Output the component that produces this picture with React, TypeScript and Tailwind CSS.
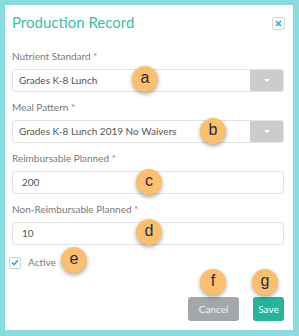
import React from "react";

const font = { fontFamily: "Lato, 'Open Sans', sans-serif" };

function Badge({ letter, x, y }: { letter: string; x: number; y: number }) {
  return (
    <div
      className="absolute w-[26px] h-[26px] rounded-full bg-[#fbbf6e] flex items-center justify-center text-[16px] leading-none text-[#1f2a4d] shadow-[0_2px_4px_rgba(0,0,0,0.35)]"
      style={{ left: x - 13, top: y - 13, fontFamily: "'Liberation Sans', Arial, sans-serif" }}
    >
      <span className="-mt-[2px]">{letter}</span>
    </div>
  );
}

function Label({ text }: { text: string }) {
  return (
    <div className="h-[14px] leading-[14px] text-[10px] text-[#7a7a7a] mb-[6px]">
      {text} <span className="text-[#e05a5a]">*</span>
    </div>
  );
}

function Select({ value }: { value: string }) {
  return (
    <div className="h-[23px] flex border border-[#e3e3e3] rounded-[3px] overflow-hidden">
      <div className="flex-1 pl-[6px] flex items-center text-[10px] text-[#555]">{value}</div>
      <div className="w-[33px] bg-[#cccccc] flex items-center justify-center">
        <div className="w-0 h-0 border-l-[3px] border-r-[3px] border-t-[3px] border-l-transparent border-r-transparent border-t-white" />
      </div>
    </div>
  );
}

function Input({ value }: { value: string }) {
  return (
    <div className="h-[23px] flex items-center border border-[#e3e3e3] rounded-[3px] pl-[9px] text-[10px] text-[#555]">
      {value}
    </div>
  );
}

export default function App() {
  return (
    <div className="w-[299px] h-[336px] bg-[#8adbe0] pt-[5px] pl-[5px] pr-[6px] pb-[6px]" style={font}>
      <div className="relative bg-white h-full pl-[7px] pr-[9px] pt-[6px]">
        <div className="flex items-center justify-between h-[22px]">
          <div className="text-[15px] leading-[22px] text-[#3cbfa3]">Production Record</div>
          <div className="w-[13px] h-[13px] mr-[-1px] mt-[2px] border border-[#d8d8d8] rounded-[2px] flex items-center justify-center">
            <svg width="7" height="7" viewBox="0 0 7 7">
              <path d="M1 1 L6 6 M6 1 L1 6" stroke="#2aa8e0" strokeWidth="1.6" />
            </svg>
          </div>
        </div>
        <div className="mt-[16px]">
          <div className="mb-[8px]">
            <Label text="Nutrient Standard" />
            <Select value="Grades K-8 Lunch" />
          </div>
          <div className="mb-[8px]">
            <Label text="Meal Pattern" />
            <Select value="Grades K-8 Lunch 2019 No Waivers" />
          </div>
          <div className="mb-[8px]">
            <Label text="Reimbursable Planned" />
            <Input value="200" />
          </div>
          <div>
            <Label text="Non-Reimbursable Planned" />
            <Input value="10" />
          </div>
        </div>
        <div className="flex items-center mt-[11px] -ml-[3px] h-[13px]">
          <div className="w-[12px] h-[12px] border border-[#d0d0d0] rounded-[2px] flex items-center justify-center">
            <svg width="8" height="7" viewBox="0 0 8 7">
              <path d="M1 3.6 L3 5.5 L7 1.2" fill="none" stroke="#2aa8e0" strokeWidth="1.6" />
            </svg>
          </div>
          <span className="ml-[7px] text-[10px] text-[#7a7a7a]">Active</span>
        </div>
        <div className="flex justify-end mt-[28px]">
          <div className="w-[51px] h-[24px] rounded-[3px] bg-[#a3a7aa] text-[10px] text-[#f2f2f2] flex items-center justify-center">
            Cancel
          </div>
          <div className="w-[31px] h-[24px] ml-[14px] rounded-[3px] bg-[#24b59a] text-[10px] text-white flex items-center justify-center">
            Save
          </div>
        </div>
        <Badge letter="a" x={140} y={74} />
        <Badge letter="b" x={208} y={126} />
        <Badge letter="c" x={144} y={177} />
        <Badge letter="d" x={144} y={227} />
        <Badge letter="e" x={69} y={255} />
        <Badge letter="f" x={208} y={277} />
        <Badge letter="g" x={260} y={277} />
      </div>
    </div>
  );
}
